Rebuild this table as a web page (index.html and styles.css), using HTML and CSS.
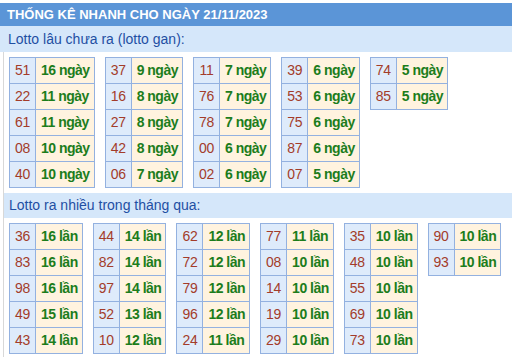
FILE: index.html
```html
<!DOCTYPE html>
<html lang="vi">
<head>
<meta charset="utf-8">
<link rel="stylesheet" href="styles.css">
</head>
<body>
<div class="title">THỐNG KÊ NHANH CHO NGÀY 21/11/2023</div>
<div class="sub">Lotto lâu chưa ra (lotto gan):</div>
<div class="box">
  <div class="tables">
    <table><tr><td class="n">51</td><td class="v">16 ngày</td></tr><tr><td class="n">22</td><td class="v">11 ngày</td></tr><tr><td class="n">61</td><td class="v">11 ngày</td></tr><tr><td class="n">08</td><td class="v">10 ngày</td></tr><tr><td class="n">40</td><td class="v">10 ngày</td></tr></table>
    <table><tr><td class="n">37</td><td class="v">9 ngày</td></tr><tr><td class="n">16</td><td class="v">8 ngày</td></tr><tr><td class="n">27</td><td class="v">8 ngày</td></tr><tr><td class="n">42</td><td class="v">8 ngày</td></tr><tr><td class="n">06</td><td class="v">7 ngày</td></tr></table>
    <table><tr><td class="n">11</td><td class="v">7 ngày</td></tr><tr><td class="n">76</td><td class="v">7 ngày</td></tr><tr><td class="n">78</td><td class="v">7 ngày</td></tr><tr><td class="n">00</td><td class="v">6 ngày</td></tr><tr><td class="n">02</td><td class="v">6 ngày</td></tr></table>
    <table><tr><td class="n">39</td><td class="v">6 ngày</td></tr><tr><td class="n">53</td><td class="v">6 ngày</td></tr><tr><td class="n">75</td><td class="v">6 ngày</td></tr><tr><td class="n">87</td><td class="v">6 ngày</td></tr><tr><td class="n">07</td><td class="v">5 ngày</td></tr></table>
    <table><tr><td class="n">74</td><td class="v">5 ngày</td></tr><tr><td class="n">85</td><td class="v">5 ngày</td></tr></table>
  </div>
  <div class="sub sub2">Lotto ra nhiều trong tháng qua:</div>
  <div class="tables">
    <table><tr><td class="n">36</td><td class="v">16 lần</td></tr><tr><td class="n">83</td><td class="v">16 lần</td></tr><tr><td class="n">98</td><td class="v">16 lần</td></tr><tr><td class="n">49</td><td class="v">15 lần</td></tr><tr><td class="n">43</td><td class="v">14 lần</td></tr></table>
    <table><tr><td class="n">44</td><td class="v">14 lần</td></tr><tr><td class="n">82</td><td class="v">14 lần</td></tr><tr><td class="n">97</td><td class="v">14 lần</td></tr><tr><td class="n">52</td><td class="v">13 lần</td></tr><tr><td class="n">10</td><td class="v">12 lần</td></tr></table>
    <table><tr><td class="n">62</td><td class="v">12 lần</td></tr><tr><td class="n">72</td><td class="v">12 lần</td></tr><tr><td class="n">79</td><td class="v">12 lần</td></tr><tr><td class="n">96</td><td class="v">12 lần</td></tr><tr><td class="n">24</td><td class="v">11 lần</td></tr></table>
    <table><tr><td class="n">77</td><td class="v">11 lần</td></tr><tr><td class="n">08</td><td class="v">10 lần</td></tr><tr><td class="n">14</td><td class="v">10 lần</td></tr><tr><td class="n">19</td><td class="v">10 lần</td></tr><tr><td class="n">29</td><td class="v">10 lần</td></tr></table>
    <table><tr><td class="n">35</td><td class="v">10 lần</td></tr><tr><td class="n">48</td><td class="v">10 lần</td></tr><tr><td class="n">55</td><td class="v">10 lần</td></tr><tr><td class="n">69</td><td class="v">10 lần</td></tr><tr><td class="n">73</td><td class="v">10 lần</td></tr></table>
    <table><tr><td class="n">90</td><td class="v">10 lần</td></tr><tr><td class="n">93</td><td class="v">10 lần</td></tr></table>
  </div>
</div>
</body>
</html>
```
FILE: styles.css
```css
html, body {
  margin: 0;
  padding: 0;
  background: #ffffff;
}
body {
  padding-top: 3px;
  font-family: "Liberation Sans", Arial, sans-serif;
}
.title {
  height: 23px;
  line-height: 23px;
  background: #5b95d7;
  color: #ffffff;
  font-size: 13px;
  font-weight: bold;
  padding-left: 7px;
  white-space: nowrap;
}
.sub {
  height: 26px;
  line-height: 26px;
  background: #d5e7fa;
  color: #1f4fa3;
  font-size: 14px;
  padding-left: 8px;
  white-space: nowrap;
}
.box {
  border-left: 1px solid #d8d8d8;
  margin-left: 3px;
  padding-top: 5px;
  min-height: 300px;
}
.sub2 {
  height: 25px;
  line-height: 25px;
  padding-left: 5px;
  margin-top: 5px;
}
.tables {
  display: flex;
  align-items: flex-start;
  gap: 10px;
  padding-left: 5px;
}
.sub2 + .tables {
  padding-top: 5px;
}
table {
  flex-shrink: 0;
  border-collapse: collapse;
}
td {
  border: 1px solid #93b1e0;
  height: 25px;
  padding: 0;
  line-height: 25px;
  white-space: nowrap;
}
td.n {
  width: 25px;
  text-align: center;
  background: #deebfb;
  color: #a33c2a;
  font-size: 14px;
  letter-spacing: -0.3px;
}
td.v {
  background: #fff3df;
  color: #1c7d1c;
  font-weight: bold;
  font-size: 14px;
  letter-spacing: -0.5px;
  padding: 0 4px 0 5px;
}
```
